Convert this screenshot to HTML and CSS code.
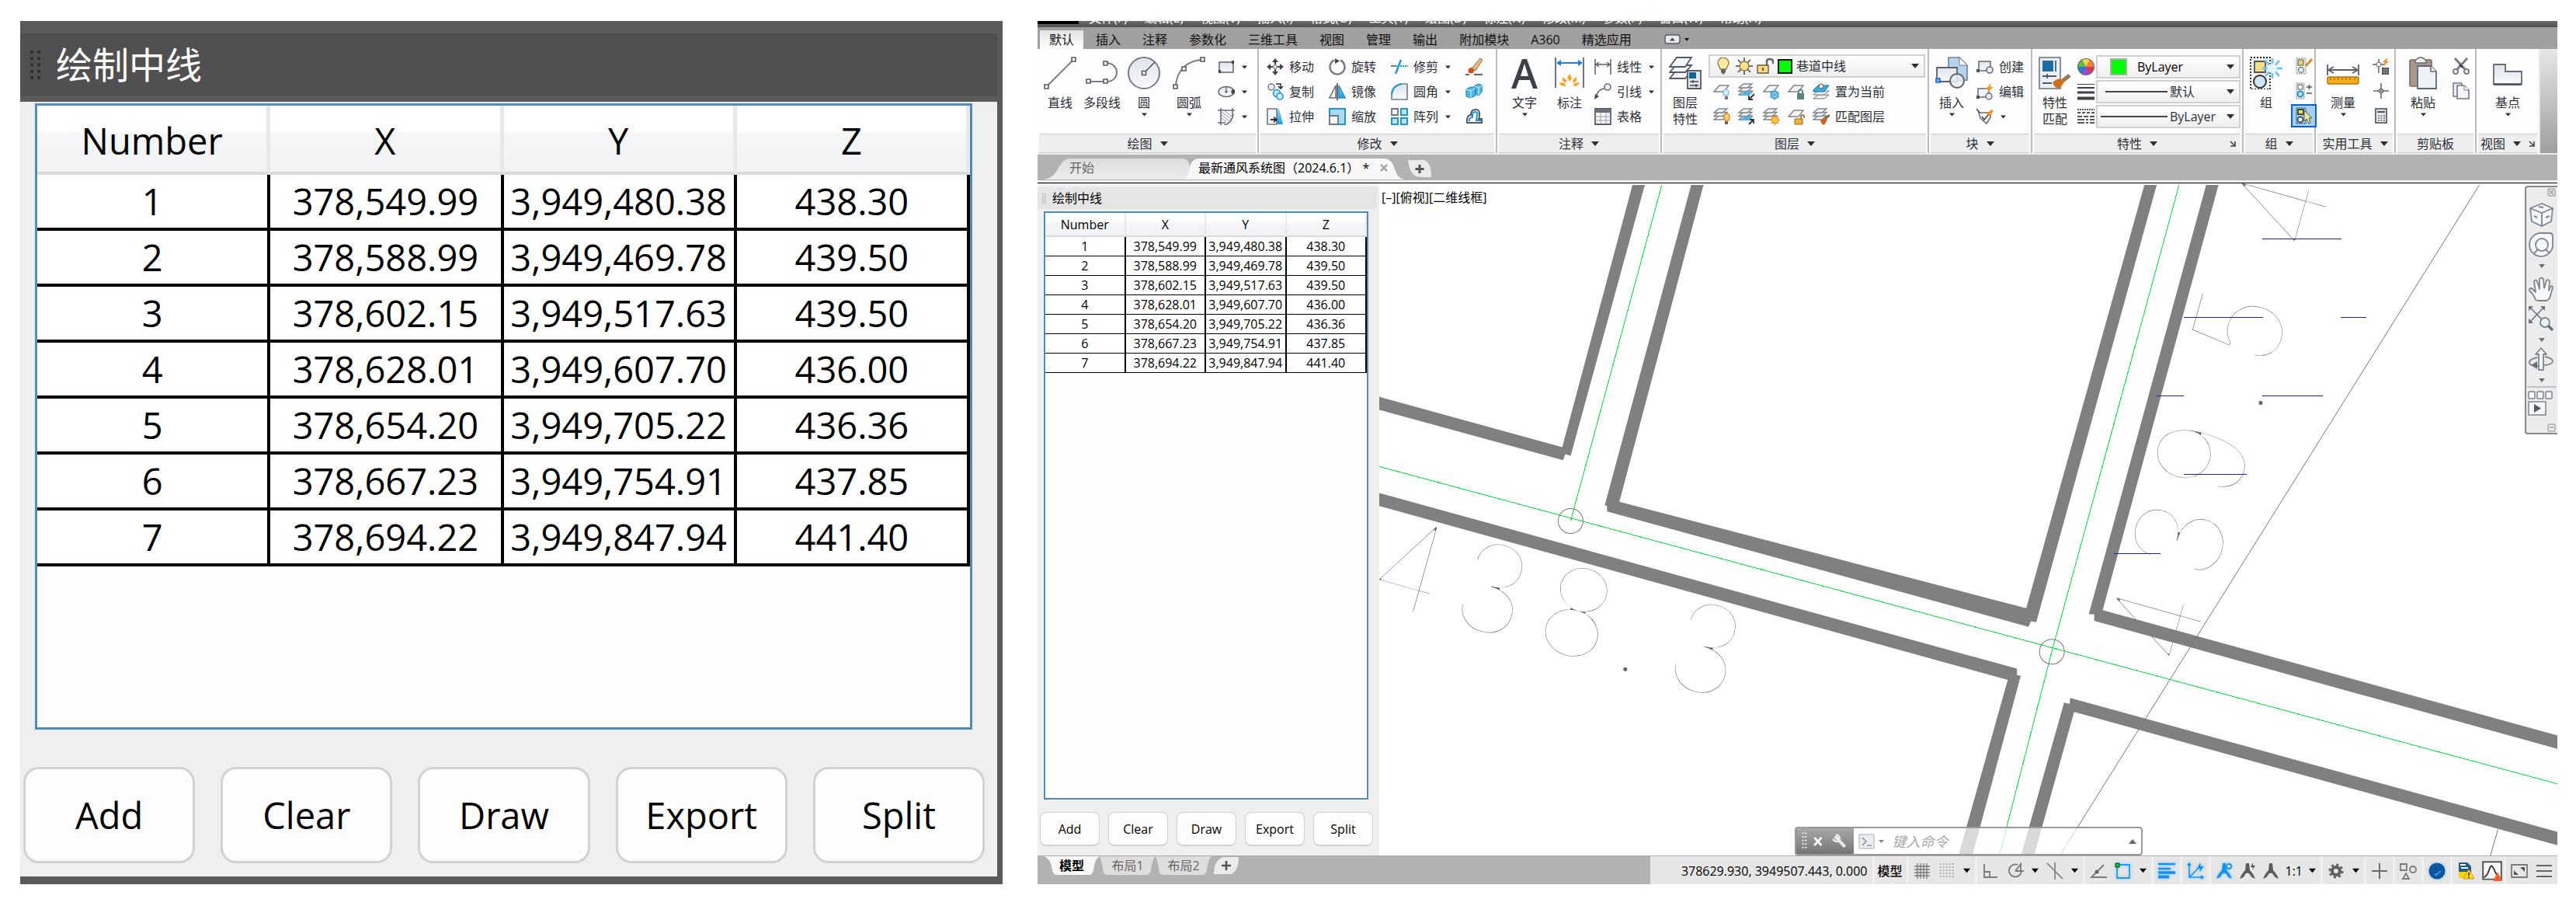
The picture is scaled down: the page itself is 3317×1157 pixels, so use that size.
FILE: index.html
```html
<!DOCTYPE html>
<html lang="zh-CN">
<head>
<meta charset="utf-8">
<meta name="viewport" content="width=device-width, initial-scale=1">
<title>绘制中线</title>
<link rel="stylesheet" href="styles.css">
</head>
<body>
<svg class="defs" aria-hidden="true">
  <defs>
    <linearGradient id="g-face" x1="0" y1="0" x2="0" y2="1"><stop offset="0" stop-color="#dfe4ee"/><stop offset="1" stop-color="#f8f9fb"/></linearGradient>
    <linearGradient id="g-blue" x1="0" y1="0" x2="0" y2="1"><stop offset="0" stop-color="#8fd4f2"/><stop offset="1" stop-color="#1c9fdd"/></linearGradient>
    <linearGradient id="g-tab" x1="0" y1="0" x2="0" y2="1"><stop offset="0" stop-color="#dcdcdc"/><stop offset="1" stop-color="#ececec"/></linearGradient>
    <symbol id="caret" viewBox="0 0 10 6"><path d="M0 0h10L5 6z" fill="currentColor"/></symbol>
    <symbol id="launch" viewBox="0 0 8 8"><path d="M1 1l5 5M7 1v6H1" fill="none" stroke="#444" stroke-width="1.6"/></symbol>
    <symbol id="sheets" viewBox="0 0 22 22"><g fill="#f4f5f7" stroke="#7c828b" stroke-width="1.3"><path d="M1 15l6-5h11l-6 5z"/><path d="M1 10.500l6-5h11l-6 5z"/><path d="M1 6l6-5h11l-6 5z"/></g></symbol>
    <symbol id="sheet" viewBox="0 0 22 22"><path d="M1 11l7-8h12l-6 8z" fill="#f6f7f9" stroke="#7c828b" stroke-width="1.4"/></symbol>
    <symbol id="compass" viewBox="0 0 22 22"><path d="M9 1h4l1 9c3 3 5 6 7 11-4-1-6-3-7-6-2-2-4-2-6 0-1 3-3 5-7 6 2-5 4-8 7-11z" fill="currentColor"/></symbol>
  </defs>
</svg>

<div class="board">
  <section class="palette palette--large" aria-label="绘制中线">
    <header class="palette__title"><svg class="grip" viewBox="0 0 13 37"><path d="M2 0v37M11 0v37" stroke="#303030" stroke-width="4" stroke-dasharray="4 4.250"/></svg><h1>绘制中线</h1></header>
    <div class="palette__body">
      <div class="list">
        <table>
          <thead><tr><th scope="col">Number</th><th scope="col">X</th><th scope="col">Y</th><th scope="col">Z</th></tr></thead>
          <tbody>
            <tr><td>1</td><td>378,549.99</td><td>3,949,480.38</td><td>438.30</td></tr>
            <tr><td>2</td><td>378,588.99</td><td>3,949,469.78</td><td>439.50</td></tr>
            <tr><td>3</td><td>378,602.15</td><td>3,949,517.63</td><td>439.50</td></tr>
            <tr><td>4</td><td>378,628.01</td><td>3,949,607.70</td><td>436.00</td></tr>
            <tr><td>5</td><td>378,654.20</td><td>3,949,705.22</td><td>436.36</td></tr>
            <tr><td>6</td><td>378,667.23</td><td>3,949,754.91</td><td>437.85</td></tr>
            <tr><td>7</td><td>378,694.22</td><td>3,949,847.94</td><td>441.40</td></tr>
          </tbody>
        </table>
      </div>
      <div class="actions"><button>Add</button><button>Clear</button><button>Draw</button><button>Export</button><button>Split</button></div>
    </div>
  </section>

  <main class="app">
    <div class="menubar"><i class="menubar__logo"></i><span>文件(F)</span><span>编辑(E)</span><span>视图(V)</span><span>插入(I)</span><span>格式(O)</span><span>工具(T)</span><span>绘图(D)</span><span>标注(N)</span><span>修改(M)</span><span>参数(P)</span><span>窗口(W)</span><span>帮助(H)</span></div>
    <nav class="tabs">
      <button class="is-active">默认</button><button>插入</button><button>注释</button><button>参数化</button><button>三维工具</button><button>视图</button><button>管理</button><button>输出</button><button>附加模块</button><button>A360</button><button>精选应用</button>
      <button class="tabs__min" aria-label="最小化"><svg width="32" height="14" viewBox="0 0 32 14"><rect x="1" y="1" width="19" height="11" rx="3" fill="#e8eaee" stroke="#555d68" stroke-width="1.500"/><path d="M7 8.500l3.500-4 3.500 4z" fill="#444b55"/><path d="M26 5h6l-3 4z" fill="#111"/></svg></button>
    </nav>

    <div class="ribbon">
      <section class="panel">
        <div class="panel__body">
          <button class="big"><svg viewBox="0 0 42 42"><path d="M4 38L38 4" stroke="#777d86" stroke-width="2"/><g fill="#fff" stroke="#555b64" stroke-width="1.600"><path d="M1 36h5v5H1zM36 1h5v5h-5z"/></g></svg><span>直线</span></button>
          <button class="big big--mid"><svg viewBox="0 0 42 42"><path d="M3 32h24c8 0 13-5 13-12S34 8 26 8" fill="none" stroke="#777d86" stroke-width="2"/><g fill="#fff" stroke="#555b64" stroke-width="1.600"><path d="M1 29h5v5H1zM23 29h5v5h-5zM23 6h5v5h-5z"/></g></svg><span>多段线</span></button>
          <button class="big"><svg viewBox="0 0 42 42"><circle cx="21" cy="21" r="20" fill="url(#g-face)" stroke="#777d86" stroke-width="2"/><path d="M21 21L35 7" stroke="#555b64" stroke-width="1.600"/><path d="M18.500 18.500h5v5h-5z" fill="#fff" stroke="#555b64" stroke-width="1.600"/></svg><span>圆</span><svg class="caret"><use href="#caret"/></svg></button>
          <button class="big"><svg viewBox="0 0 42 42"><path d="M4 38C5 18 18 5 38 4" fill="none" stroke="#777d86" stroke-width="2"/><g fill="#fff" stroke="#555b64" stroke-width="1.600"><path d="M1 36h5v5H1zM36 1h5v5h-5zM12 13h5v5h-5z"/></g></svg><span>圆弧</span><svg class="caret"><use href="#caret"/></svg></button>
          <div class="stack push-8">
            <button class="small"><svg class="ic" viewBox="0 0 22 22"><rect x="2" y="5" width="18" height="13" fill="url(#g-face)" stroke="#666c76" stroke-width="1.600"/><path d="M18 3h3v4h-3zM1 15h3v4H1z" fill="#444"/></svg><svg class="caret"><use href="#caret"/></svg></button>
            <button class="small"><svg class="ic" viewBox="0 0 22 22"><ellipse cx="11" cy="11" rx="10" ry="6.500" fill="url(#g-face)" stroke="#666c76" stroke-width="1.600"/><path d="M9 11h4M11 4v9M18 9h4v4h-4z" stroke="#444" fill="#444"/></svg><svg class="caret"><use href="#caret"/></svg></button>
            <button class="small"><svg class="ic" viewBox="0 0 22 22"><path d="M4 0v22M0 3h22M0 19h10M19 0v11M8 22q10-2 12-14" fill="none" stroke="#666c76" stroke-width="1.600"/><path d="M5 5l12 9M5 9l10 8M5 13l6 5M9 4l9 7" stroke="#8a9098"/></svg><svg class="caret"><use href="#caret"/></svg></button>
          </div>
        </div>
        <footer class="panel__name">绘图<svg class="caret"><use href="#caret"/></svg></footer>
      </section>

      <section class="panel">
        <div class="panel__body gap-19">
          <div class="stack push-10">
            <button class="small"><svg class="ic" viewBox="0 0 22 22"><path d="M11 0l4 5h-3v3h-2V5H7zM11 22l-4-5h3v-3h2v3h3zM0 11l5-4v3h3v2H5v3zM22 11l-5 4v-3h-3v-2h3V7z" fill="#3c4048"/><path d="M9 9h4v4H9z" fill="#fff" stroke="#666"/></svg>移动</button>
            <button class="small"><svg class="ic" viewBox="0 0 22 22"><circle cx="6" cy="5" r="4" fill="#eef" stroke="#70767f" stroke-width="1.500"/><path d="M12 1h6v5m-3-2l3 3 3-3" fill="none" stroke="#333" stroke-width="1.600"/><circle cx="13" cy="13" r="4.500" fill="#bfe6f8" stroke="#1996d6" stroke-width="1.600"/><circle cx="17" cy="17" r="4" fill="#d8f0fb" stroke="#1996d6" stroke-width="1.600"/></svg>复制</button>
            <button class="small"><svg class="ic" viewBox="0 0 22 22"><path d="M13 1h3l5 20h-8z" fill="url(#g-blue)"/><path d="M1 1h12v20H1z" fill="#f4f6f9" stroke="#70767f" stroke-width="1.600"/><path d="M5 15h7m-3-3l4 3-4 3" fill="none" stroke="#333" stroke-width="1.800"/></svg>拉伸</button>
          </div>
          <div class="stack">
            <button class="small"><svg class="ic" viewBox="0 0 22 22"><path d="M7 2.500A9.500 9.500 0 1 0 15 2.500" fill="none" stroke="#777d86" stroke-width="2.500"/><path d="M8 0v7l6-3.500z" fill="#444"/></svg>旋转</button>
            <button class="small"><svg class="ic" viewBox="0 0 22 22"><path d="M9 3v16H1z" fill="#f4f6f9" stroke="#666c76" stroke-width="1.500"/><path d="M13 3v16h8z" fill="url(#g-blue)" stroke="#1996d6" stroke-width="1.500"/><path d="M11 0v22" stroke="#444" stroke-width="1.600"/></svg>镜像</button>
            <button class="small"><svg class="ic" viewBox="0 0 22 22"><path d="M1 1h20v20H1z" fill="#a9dcf4" stroke="#1996d6" stroke-width="2"/><path d="M1 10h11v11H1z" fill="#f4f6f9" stroke="#70767f" stroke-width="1.800"/></svg>缩放</button>
          </div>
          <div class="stack">
            <button class="small"><svg class="ic" viewBox="0 0 22 22"><path d="M0 10h8" stroke="#777d86" stroke-width="2"/><path d="M6 20L13 2" stroke="#1996d6" stroke-width="2.400"/><path d="M12 10h10" stroke="#1996d6" stroke-width="2" stroke-dasharray="2 1"/></svg>修剪<svg class="caret"><use href="#caret"/></svg></button>
            <button class="small"><svg class="ic" viewBox="0 0 22 22"><path d="M1 21V14Q2 3 14 1h7v20z" fill="url(#g-face)" stroke="#777d86" stroke-width="1.600"/><path d="M1 14Q2 3 14 1" fill="none" stroke="#1996d6" stroke-width="2.200"/></svg>圆角<svg class="caret"><use href="#caret"/></svg></button>
            <button class="small"><svg class="ic" viewBox="0 0 22 22"><path d="M1 1h8v8H1z" fill="#f4f6f9" stroke="#70767f" stroke-width="1.800"/><path d="M13 1h8v8h-8zM1 13h8v8H1zM13 13h8v8h-8z" fill="#bfe6f8" stroke="#1996d6" stroke-width="2"/></svg>阵列<svg class="caret"><use href="#caret"/></svg></button>
          </div>
          <div class="stack">
            <button class="small" aria-label="删除"><svg class="ic" viewBox="0 0 22 22"><path d="M9 12L19 0l3 2-9 14z" fill="#e8bb7c" stroke="#8a6a3c"/><path d="M7 11l6 4-2 3-6-4z" fill="#9aa"/><circle cx="7" cy="16" r="3.500" fill="#e0480e"/><path d="M0 21h5M11 21h11" stroke="#333" stroke-width="1.500"/></svg></button>
            <button class="small" aria-label="分解"><svg class="ic" viewBox="0 0 22 22"><path d="M1 8l5-3h7v11l-6 3-6-2zM12 3l5-2 5 2v7l-5 6-4-2z" fill="#4bb4e2" stroke="#1585bf"/><path d="M1 8l6 2 6-4M7 10v9M12 4l5 2 5-3M17 6v9" stroke="#e2f5fc" fill="none"/></svg></button>
            <button class="small" aria-label="偏移"><svg class="ic" viewBox="0 0 22 22"><path d="M2 19V14q1-5 5-5 0-7 6-7t5 7q0 3-1 5h4v5z" fill="#fff" stroke="#555b64" stroke-width="2"/><path d="M5 17v-3q1-2 4-2V8q1-3 4-3t2 4l-1 7h6" fill="none" stroke="#1996d6" stroke-width="2"/></svg></button>
          </div>
        </div>
        <footer class="panel__name">修改<svg class="caret"><use href="#caret"/></svg></footer>
      </section>

      <section class="panel">
        <div class="panel__body">
          <button class="big push-6"><svg viewBox="0 0 42 42"><path d="M18 3h6l14 38h-6l-4-11H14l-4 11H4zM21 9l-5 16h10z" fill="#3c4047"/></svg><span>文字</span><svg class="caret"><use href="#caret"/></svg></button>
          <button class="big"><svg viewBox="0 0 42 42"><path d="M3 1v39M39 1v39" stroke="#70767f" stroke-width="2"/><path d="M4 8l6-4v3h22V4l6 4-6 4V9H10v3z" fill="#1d7fe6"/><path d="M21 22l3 5-3 5-3-5zM12 26l5 4-1 4-4-3zM30 26l-5 4 1 4 4-3zM8 33l7 1 1 4-6-1zM34 33l-7 1-1 4 6-1z" fill="#f9a21b"/></svg><span>标注</span></button>
          <div class="stack push-3">
            <button class="small"><svg class="ic" viewBox="0 0 22 22"><path d="M1 1v20M21 1v20M2 8h18M6 5L2 8l4 3M16 5l4 3-4 3" fill="none" stroke="#5c626b" stroke-width="1.500"/></svg>线性<svg class="caret"><use href="#caret"/></svg></button>
            <button class="small"><svg class="ic" viewBox="0 0 22 22"><circle cx="17" cy="5" r="4" fill="#f4f6f9" stroke="#666c76" stroke-width="1.600"/><path d="M13 7Q5 7 2 18" fill="none" stroke="#5c626b" stroke-width="1.600"/><path d="M0 21l1-7 5 3z" fill="#444"/></svg>引线<svg class="caret"><use href="#caret"/></svg></button>
            <button class="small"><svg class="ic" viewBox="0 0 22 22"><path d="M1 1h20v20H1z" fill="#f4f6f9" stroke="#555b64" stroke-width="1.800"/><path d="M1 1h20v5H1z" fill="#6a7079"/><path d="M8 6v15M15 6v15M1 11h20M1 16h20" stroke="#9aa0a8"/></svg>表格</button>
          </div>
        </div>
        <footer class="panel__name">注释<svg class="caret"><use href="#caret"/></svg></footer>
      </section>

      <section class="panel">
        <div class="panel__body">
          <button class="big push-1"><svg viewBox="0 0 42 42"><g fill="#f5f6f8" stroke="#555b64" stroke-width="1.800"><path d="M1 28l8-10h20l-8 10z"/><path d="M1 20l8-9h20l-8 9z"/><path d="M1 13L10 1h19l-8 12z"/><path d="M24 18h17v23H24z" fill="#e4e8ee"/></g><path d="M26 20h9v8h-9z" fill="#17649a"/><path d="M27 32h11M27 37h11M31 30v4M35 35v4" stroke="#444" stroke-width="1.500"/></svg><span>图层<br>特性</span></button>
          <div class="stack stack--wide push-1">
            <div class="combo">
              <svg class="ic" viewBox="0 0 22 22"><path d="M7 15c0-3-3-4-3-8a7 7 0 0 1 14 0c0 4-3 5-3 8z" fill="#ffe8a0" stroke="#8b7a4b" stroke-width="1.300"/><path d="M8 15h6v4l-3 3-3-3z" fill="#666"/></svg>
              <svg class="ic" viewBox="0 0 22 22"><path d="M11 0v22M0 11h22M3 3l16 16M19 3L3 19" stroke="#444" stroke-width="1.500"/><circle cx="11" cy="11" r="6" fill="#ffe08a" stroke="#8b7a4b" stroke-width="1.400"/></svg>
              <svg class="ic" viewBox="0 0 22 22"><path d="M1 10h14v10H1z" fill="#fbd98a" stroke="#6b5a34" stroke-width="1.400"/><path d="M13 10V5q0-3 4-3t4 3v3" fill="none" stroke="#666" stroke-width="2.400"/><path d="M8 13v4" stroke="#6b5a34" stroke-width="2"/></svg>
              <i class="swatch"></i>
              <select aria-label="图层"><option>巷道中线</option></select>
              <svg class="caret"><use href="#caret"/></svg>
            </div>
            <div class="tools">
              <svg class="ic" viewBox="0 0 22 22"><use href="#sheet"/><path d="M16 8a4 4 0 0 1 4 5l-1 3h-5l-1-3a4 4 0 0 1 3-5z" fill="#d8effb" stroke="#5aaede"/><path d="M15 17h4v4h-4z" fill="#777"/></svg>
              <svg class="ic" viewBox="0 0 22 22"><use href="#sheets"/><path d="M2 16l6-5h12l-6 5z" fill="#4cb5e6"/><path d="M21 14l-6 6M14 16v5h5" stroke="#333" stroke-width="1.800" fill="none"/></svg>
              <svg class="ic" viewBox="0 0 22 22"><use href="#sheet"/><circle cx="15" cy="15" r="4.500" fill="#d8effb" stroke="#3a93cc" stroke-width="2"/><path d="M15 8v14M9 12l12 6M21 12L9 18" stroke="#5aaede" stroke-width="1.500"/></svg>
              <svg class="ic" viewBox="0 0 22 22"><use href="#sheet"/><path d="M12 13h9v8h-9z" fill="#5c8577"/><path d="M14 13v-3q2-3 5 0v3" fill="none" stroke="#5c8577" stroke-width="1.800"/></svg>
              <svg class="ic" viewBox="0 0 22 22"><path d="M1 20l6-5h14l-6 5z" fill="#eee" stroke="#70767f"/><path d="M1 15l6-5h14l-6 5z" fill="#eee" stroke="#70767f"/><path d="M1 9l6-6h14l-6 8H1z" fill="#3cabe0" stroke="#1b6f9d"/><circle cx="11" cy="4" r="3" fill="#eee" stroke="#555"/></svg>
              <span>置为当前</span>
            </div>
            <div class="tools">
              <svg class="ic" viewBox="0 0 22 22"><use href="#sheets"/><path d="M17 7a4 4 0 0 1 4 5l-1 4h-5l-1-4a4 4 0 0 1 3-5z" fill="#ffd77a" stroke="#e88a1a" stroke-width="1.500"/><path d="M15 17h4v4h-4z" fill="#666"/></svg>
              <svg class="ic" viewBox="0 0 22 22"><use href="#sheets"/><path d="M2 16l6-5h12l-6 5z" fill="#4cb5e6"/><path d="M14 21l6-6M15 15h5v5" stroke="#333" stroke-width="1.800" fill="none"/></svg>
              <svg class="ic" viewBox="0 0 22 22"><use href="#sheets"/><path d="M15 9v13M9 15.500h13M11 11l9 9M20 11l-9 9" stroke="#f07c12" stroke-width="1.500"/><circle cx="15.500" cy="15.500" r="4" fill="#ffc93c" stroke="#f07c12"/></svg>
              <svg class="ic" viewBox="0 0 22 22"><use href="#sheet"/><path d="M9 14h10v7H9z" fill="#f2b632" stroke="#8b6a1c"/><path d="M17 14v-3q0-2 2-2t2 2v2" fill="none" stroke="#8b6a1c" stroke-width="1.600"/></svg>
              <svg class="ic" viewBox="0 0 22 22"><use href="#sheets"/><path d="M22 9l-6 5" stroke="#8c5a34" stroke-width="2.600"/><path d="M10 16q5-5 9-1l-4 7q-4-1-5-6z" fill="#c9641f"/></svg>
              <span>匹配图层</span>
            </div>
          </div>
        </div>
        <footer class="panel__name">图层<svg class="caret"><use href="#caret"/></svg></footer>
      </section>

      <section class="panel">
        <div class="panel__body">
          <button class="big"><svg viewBox="0 0 42 42"><path d="M17 1h14l10 10v19H17z" fill="#b4d4ee" stroke="#6b8099" stroke-width="1.600"/><path d="M31 1v10h10z" fill="#fff" stroke="#6b8099"/><path d="M2 14h26v18H2z" fill="url(#g-face)" stroke="#5c626b" stroke-width="1.800"/><circle cx="28" cy="31" r="9" fill="#e8ecf2" fill-opacity=".85" stroke="#5c626b" stroke-width="2"/><path d="M1 28h5v5H1z" fill="#6fb3ff" stroke="#1268cc" stroke-width="1.600"/></svg><span>插入</span><svg class="caret"><use href="#caret"/></svg></button>
          <div class="stack push-3">
            <button class="small"><svg class="ic" viewBox="0 0 22 22"><path d="M3 4h15v12H3z" fill="url(#g-face)" stroke="#666c76" stroke-width="1.600"/><circle cx="17" cy="15" r="4" fill="#e8ecf2" stroke="#666c76" stroke-width="1.600"/><path d="M0 14h4v4H0z" fill="#555"/></svg>创建</button>
            <button class="small"><svg class="ic" viewBox="0 0 22 22"><path d="M2 7h14v11H2z" fill="#f2f4f7" stroke="#666c76" stroke-width="1.500"/><circle cx="16" cy="17" r="4" fill="#e8ecf2" stroke="#666c76" stroke-width="1.500"/><path d="M19 0l-7 7h4l-2 5 8-7h-4z" fill="#f7a01e"/><path d="M0 16h4v4H0z" fill="#555"/></svg>编辑</button>
            <button class="small"><svg class="ic" viewBox="0 0 22 22"><path d="M3 6h15v6l-5 8-8-7z" fill="#f2f4f7" stroke="#666c76" stroke-width="1.500"/><path d="M0 1l4 5M7 11l3 4 6-7" stroke="#444" stroke-width="1.600" fill="none"/><path d="M13 8l6-6 3 2-6 7z" fill="#f28c28"/></svg><svg class="caret"><use href="#caret"/></svg></button>
          </div>
        </div>
        <footer class="panel__name">块<svg class="caret"><use href="#caret"/></svg></footer>
      </section>

      <section class="panel">
        <div class="panel__body">
          <button class="big"><svg viewBox="0 0 42 42"><path d="M1 1h27v40H1z" fill="#eceff4" stroke="#8a9098" stroke-width="2"/><path d="M5 5h14v14H5z" fill="#1b6ca3"/><path d="M22 5v14M5 25h18M5 34h12M11 22v6" stroke="#4a5a70" stroke-width="1.800"/><path d="M40 24l-9 7" stroke="#9b7654" stroke-width="5"/><path d="M18 33q8-8 16-2l-6 9q-7 2-10-7z" fill="#d0701c"/></svg><span>特性<br>匹配</span></button>
          <div class="stack">
            <div class="prop"><svg class="ic" viewBox="0 0 22 22"><circle cx="11" cy="11" r="11" fill="#666"/><path d="M11 11L6 2.500A10 10 0 0 1 16 2.500z" fill="#ffd34d"/><path d="M11 11l5-8.500A10 10 0 0 1 21 11z" fill="#f4813a"/><path d="M11 11h10a10 10 0 0 1-5 8.500z" fill="#e2374c"/><path d="M11 11l5 8.500a10 10 0 0 1-10 0z" fill="#9a4bd0"/><path d="M11 11l-5 8.500A10 10 0 0 1 1 11z" fill="#2d78d8"/><path d="M11 11H1a10 10 0 0 1 5-8.500z" fill="#5bbd4a"/></svg>
              <div class="combo combo--color"><i class="swatch swatch--plain"></i><select aria-label="颜色"><option>ByLayer</option></select><svg class="caret"><use href="#caret"/></svg></div></div>
            <div class="prop"><svg class="ic" viewBox="0 0 22 22"><path d="M0 1.500h22" stroke="#3c4048"/><path d="M0 6h22" stroke="#3c4048" stroke-width="2"/><path d="M0 12h22" stroke="#3c4048" stroke-width="3"/><path d="M0 19.500h22" stroke="#3c4048" stroke-width="4"/></svg>
              <div class="combo combo--weight"><i class="stroke"></i><select aria-label="线宽"><option>默认</option></select><svg class="caret"><use href="#caret"/></svg></div></div>
            <div class="prop"><svg class="ic" viewBox="0 0 22 22"><path d="M0 2h22" stroke="#555" stroke-width="2" stroke-dasharray="2 1"/><path d="M0 6h22" stroke="#555" stroke-width="2" stroke-dasharray="4 2"/><path d="M0 11h22" stroke="#555" stroke-width="2" stroke-dasharray="6 2"/><path d="M0 15h22M0 19h22" stroke="#555" stroke-width="2" stroke-dasharray="9 2 3 2"/></svg>
              <div class="combo combo--type"><i class="stroke"></i><select aria-label="线型"><option>ByLayer</option></select><svg class="caret"><use href="#caret"/></svg></div></div>
          </div>
        </div>
        <footer class="panel__name">特性<svg class="caret"><use href="#caret"/></svg><svg class="launch"><use href="#launch"/></svg></footer>
      </section>

      <section class="panel">
        <div class="panel__body">
          <button class="big"><svg viewBox="0 0 42 42"><path d="M1 1h25v41H1z" fill="#f2f2f2" stroke="#222" stroke-width="1.800" stroke-dasharray="2 2"/><path d="M6 6h14v14H6z" fill="#f0df86" stroke="#555" stroke-width="1.800"/><circle cx="13" cy="32" r="8" fill="#cfe6f4" stroke="#333" stroke-width="2"/><path d="M29 2v26M16 15h26M20 5l18 20M38 5L20 25" stroke="#7cc4ee" stroke-width="3"/><circle cx="29" cy="15" r="6" fill="#e6f6fe"/></svg><span>组</span></button>
          <div class="stack push-3">
            <button class="tile" aria-label="组编辑"><svg class="ic" viewBox="0 0 22 22"><path d="M1 1h12v20H1z" fill="#eee" stroke="#888" stroke-dasharray="2 1"/><path d="M3 3h7v7H3z" fill="#e8d36a" stroke="#555"/><circle cx="7" cy="16" r="3.500" fill="#dff1fb" stroke="#555"/><path d="M21 2l-8 9" stroke="#e38b2a" stroke-width="3"/></svg></button>
            <button class="tile" aria-label="添加删除"><svg class="ic" viewBox="0 0 22 22"><path d="M1 1h10v20H1z" fill="#eee" stroke="#888" stroke-dasharray="2 1"/><path d="M3 3h6v6H3z" fill="#fff" stroke="#555"/><circle cx="6" cy="15" r="3.500" fill="#bfe6f8" stroke="#1996d6" stroke-width="2"/><path d="M14 6h7M17.500 3v6M14 14h7" stroke="#555" stroke-width="1.600"/></svg></button>
            <button class="tile is-on" aria-label="组选择"><svg class="ic" viewBox="0 0 22 22"><path d="M1 1h12v20H1z" fill="#9cc9ee" stroke="#246" stroke-dasharray="2 1"/><path d="M3 3h7v6H3z" fill="#f0df60" stroke="#222" stroke-width="1.500"/><circle cx="6" cy="16" r="3.500" fill="#dff1fb" stroke="#333" stroke-width="1.500"/><path d="M11 4v14l3-3 3 6 2-1-2-6h4z" fill="#f5e69a" stroke="#555"/></svg></button>
          </div>
        </div>
        <footer class="panel__name">组<svg class="caret"><use href="#caret"/></svg></footer>
      </section>

      <section class="panel">
        <div class="panel__body">
          <button class="big push-6"><svg viewBox="0 0 42 42"><path d="M1 10v14M41 10v14M2 17h38M9 13l-7 4 7 4M33 13l7 4-7 4" fill="none" stroke="#5c626b" stroke-width="1.800"/><rect x="1" y="26" width="40" height="9" rx="2" fill="#f7ae1d" stroke="#b9740f" stroke-width="1.500"/><path d="M5 27v3M10 27v3M15 27v3M20 27v3M25 27v3M30 27v3M36 27v3" stroke="#8d5a10"/></svg><span>测量</span><svg class="caret"><use href="#caret"/></svg></button>
          <div class="stack push-3">
            <button class="tile" aria-label="快速选择"><svg class="ic" viewBox="0 0 22 22"><path d="M0 9h16M8 2v18" stroke="#666" stroke-width="1.500"/><circle cx="8" cy="9" r="3" fill="#fff" stroke="#666"/><path d="M19 0l-6 6h3l-2 5 7-6h-3z" fill="#f68b1f"/><path d="M12 13h9v9h-9z" fill="#444"/><path d="M15 13v9M18 13v9M12 16h9M12 19h9" stroke="#ccc" stroke-width=".6"/></svg></button>
            <button class="tile" aria-label="点坐标"><svg class="ic" viewBox="0 0 22 22"><path d="M1 11h20M11 1v20" stroke="#666" stroke-width="1.500"/><circle cx="11" cy="11" r="3" fill="#999" stroke="#666"/></svg></button>
            <button class="tile" aria-label="计算器"><svg class="ic" viewBox="0 0 22 22"><rect x="4" y="2" width="14" height="18" fill="#eceff4" stroke="#5c626b" stroke-width="1.800"/><path d="M6 6h10" stroke="#5c626b" stroke-width="2.500"/><path d="M7 11h9M7 14h9M7 17h9" stroke="#5c626b" stroke-width="1.600" stroke-dasharray="2 1.500"/></svg></button>
          </div>
        </div>
        <footer class="panel__name">实用工具<svg class="caret"><use href="#caret"/></svg></footer>
      </section>

      <section class="panel">
        <div class="panel__body">
          <button class="big push-6"><svg viewBox="0 0 42 42"><rect x="4" y="4" width="28" height="34" rx="2" fill="#a8988a" stroke="#7a6c60" stroke-width="1.600"/><path d="M11 5q7-8 14 0v3H11z" fill="#eef0f3" stroke="#666c76" stroke-width="1.500"/><path d="M14 12h17l7 7v22H14z" fill="#eef2f8" stroke="#5c6a80" stroke-width="1.800"/><path d="M31 12v7h7" fill="#fff" stroke="#5c6a80" stroke-width="1.500"/></svg><span>粘贴</span><svg class="caret"><use href="#caret"/></svg></button>
          <div class="stack push-3">
            <button class="tile" aria-label="剪切"><svg class="ic" viewBox="0 0 22 22"><path d="M3 1l13 14M19 1L6 15" stroke="#777d86" stroke-width="3"/><path d="M9 9l4 4" stroke="#333" stroke-width="2"/><ellipse cx="4" cy="18" rx="3" ry="3" fill="none" stroke="#777d86" stroke-width="2"/><ellipse cx="18" cy="18" rx="3" ry="3" fill="none" stroke="#777d86" stroke-width="2"/></svg></button>
            <button class="tile" aria-label="复制"><svg class="ic" viewBox="0 0 22 22"><path d="M1 1h11v17H1z" fill="#eceff4" stroke="#70767f" stroke-width="1.500"/><path d="M6 4h9l6 6v11H6z" fill="#f5f6f8" stroke="#70767f" stroke-width="1.600"/><path d="M15 4v6h6" fill="#fff" stroke="#70767f"/></svg></button>
          </div>
        </div>
        <footer class="panel__name">剪贴板</footer>
      </section>

      <section class="panel panel--last">
        <div class="panel__body panel__body--center">
          <button class="big"><svg viewBox="0 0 42 42"><path d="M3 10h15v9h21v16H3z" fill="url(#g-face)" stroke="#666c76" stroke-width="1.800"/><path d="M3 36h36" stroke="#555b64" stroke-width="2"/></svg><span>基点</span><svg class="caret"><use href="#caret"/></svg></button>
        </div>
        <footer class="panel__name">视图<svg class="caret"><use href="#caret"/></svg><svg class="launch"><use href="#launch"/></svg></footer>
      </section>
      <div class="ribbon__rest"></div>
    </div>

    <nav class="files">
      <button class="file"><svg class="file__shape" viewBox="0 0 200 30" preserveAspectRatio="none"><path d="M0 30C24 30 20 3 38 3h150q12 0 12 12v15z" fill="url(#g-tab)"/></svg><span>开始</span></button>
      <button class="file file--open"><svg class="file__shape" viewBox="0 0 290 30" preserveAspectRatio="none"><path d="M0 30C16 30 4 3 24 3h236c20 0 10 27 30 27z" fill="#f7f7f7"/></svg><span>最新通风系统图（2024.6.1） *</span><svg class="file__close" viewBox="0 0 10 10"><path d="M1 1l8 8M9 1L1 9" stroke="#a8a8a8" stroke-width="2.600"/></svg></button>
      <button class="file-add" aria-label="新建"><svg viewBox="0 0 30 22"><path d="M0 0h20q10 2 10 22H14Q2 20 0 0z" fill="#ebebeb"/><path d="M15 6v11M9.500 11.500h11" stroke="#555" stroke-width="3"/></svg></button>
    </nav>

    <div class="work">
      <section class="palette palette--docked" aria-label="绘制中线">
        <header class="palette__title"><svg class="grip" viewBox="0 0 5 13"><path d="M1 0v13M4 0v13" stroke="#999" stroke-dasharray="2 1"/></svg><h2>绘制中线</h2></header>
        <div class="palette__body">
          <div class="list">
            <table>
              <thead><tr><th scope="col">Number</th><th scope="col">X</th><th scope="col">Y</th><th scope="col">Z</th></tr></thead>
              <tbody>
                <tr><td>1</td><td>378,549.99</td><td>3,949,480.38</td><td>438.30</td></tr>
                <tr><td>2</td><td>378,588.99</td><td>3,949,469.78</td><td>439.50</td></tr>
                <tr><td>3</td><td>378,602.15</td><td>3,949,517.63</td><td>439.50</td></tr>
                <tr><td>4</td><td>378,628.01</td><td>3,949,607.70</td><td>436.00</td></tr>
                <tr><td>5</td><td>378,654.20</td><td>3,949,705.22</td><td>436.36</td></tr>
                <tr><td>6</td><td>378,667.23</td><td>3,949,754.91</td><td>437.85</td></tr>
                <tr><td>7</td><td>378,694.22</td><td>3,949,847.94</td><td>441.40</td></tr>
              </tbody>
            </table>
          </div>
          <div class="actions"><button>Add</button><button>Clear</button><button>Draw</button><button>Export</button><button>Split</button></div>
        </div>
      </section>

      <section class="canvas" aria-label="图形">
        <svg class="drawing" viewBox="0 0 1517 864" preserveAspectRatio="xMidYMid slice">
          <g class="note">
            <g transform="translate(39 550) rotate(15.700)"><text x="-14 96 209 288 381" y="0">438.3</text></g>
            <g transform="translate(1058 567) rotate(-74.300)"><text x="-16 98 206 295 382" y="0">439.5</text></g>
            <g transform="translate(1220 31) rotate(-74.300)"><text x="-19" y="0">4</text></g>
          </g>
          <g transform="translate(-16 -16) scale(.993 .598)">
            <g class="wall">
              <path d="M16 485L254 594 345 30h16L265 612l-7-3-3 13L16 513z"/>
              <path d="M421 30h16L328 711 855 940 1008 30h16L868 970l-7-2-3 12L312 732v-12l-3-1z"/>
              <path d="M1088 30h16L954 944l590 270v29L943 967v-14h-7z"/>
              <path d="M16 692L843 1070v14l5 1-63 388h-18l64-379L16 720z"/>
              <path d="M912 1133l632 288v29L917 1163l-52 310h-17l56-330 7 3z"/>
            </g>
            <g class="axis"><path d="M383 30L265 752M16 635l1528 683M1053 30L888 1034 820 1473"/></g>
            <g class="thin"><path d="M1442 30L898 1473M1466 1415l-10 58"/></g>
            <g class="mark"><path d="M1161 146h102M1059 315h103M1262 315h33M1024 484h35M1161 484h78M1059 653h82M969 822h60"/></g>
          </g>
          <g class="thin"><circle cx="247" cy="434" r="16"/><circle cx="866" cy="602" r="16"/></g>
        </svg>
        <p class="view-label">[–][俯视][二维线框]</p>

        <aside class="navbar">
          <svg viewBox="0 0 42 320">
            <g fill="#eee" stroke="#aaa" stroke-width="1.500"><rect x="30" y="4" width="9" height="9" rx="2"/><rect x="30" y="307" width="9" height="9" rx="2"/></g>
            <path d="M32 6l5 5M37 6l-5 5M32 311h5" stroke="#999" stroke-width="1.400"/>
            <g fill="#f6f7f9" stroke="#7e858e" stroke-width="1.800" stroke-linejoin="round">
              <path d="M7 29l15-6 14 6-2 17-12 6-13-6z"/><path d="M7 29l15 6 14-6M22 35v17" fill="none"/><path d="M12 39l4 2M27 41l5-2M18 27l6 1" stroke-width="2"/>
              <path d="M22 61h10q4 0 4 4v10a15 15 0 1 1-14-14z"/><circle cx="22" cy="76" r="8"/><path d="M12 87l5-5M32 87l-5-5"/>
              <path d="M14 147q-3-8-8-12-1-3 3-3l5 5-2-14q2-3 4 0l3 10v-13q2-3 5 0l1 12 3-10q3-2 4 1l-1 12 2-5q3-2 3 1l-4 14-4 3H17z"/>
              <path d="M18 237v-20h-4l7-8 7 8h-4v20z"/><path d="M16 221c-14 3-14 11 2 11M26 220c14 3 13 10-1 11" fill="none"/>
            </g>
            <g fill="#6a7079"><path d="M18 101h8l-4 5zM18 196h8l-4 5zM18 248h8l-4 5zM16 226v10l-8-5z"/><path d="M5 155h6l-6 6zM26 155v6l-6-6zM5 177v-6l6 6z"/></g>
            <path d="M7 157l17 17M24 157L7 175" stroke="#6a7079" stroke-width="1.500"/>
            <circle cx="26" cy="176" r="6" fill="#eaf4f4" stroke="#7e858e" stroke-width="1.800"/><path d="M30 180l6 6" stroke="#6a7079" stroke-width="3.500"/>
            <path d="M3 259h37" stroke="#999"/>
            <g fill="#f6f7f9" stroke="#7e858e" stroke-width="1.500"><rect x="5" y="265" width="8" height="9" rx="1"/><rect x="16" y="265" width="8" height="9" rx="1"/><rect x="27" y="265" width="8" height="9" rx="1"/><path d="M5 278h22v17H5z"/></g>
            <path d="M12 281v11l9-5.500z" fill="#555b64"/>
          </svg>
        </aside>

        <form class="command">
          <div class="command__grip">
            <svg viewBox="0 0 74 36"><path d="M6 6v24M10 6v24" stroke="#e6e6e6" stroke-width="2.500" stroke-dasharray="2 3"/><path d="M22 13l10 11M32 13L22 24" stroke="#fff" stroke-width="3"/><path d="M51 11l14 15" stroke="#e8e8e8" stroke-width="4.500"/><circle cx="53" cy="14" r="4.500" fill="none" stroke="#e8e8e8" stroke-width="3" stroke-dasharray="21 7" transform="rotate(-100 53 14)"/></svg>
          </div>
          <svg class="command__prompt" viewBox="0 0 34 20"><rect x="1" y="1" width="19" height="18" rx="1" fill="#e9edf1" stroke="#c0c5cb" stroke-width="1.500"/><path d="M5 5l5 5-5 5M11 15h6" fill="none" stroke="#8b9097" stroke-width="1.600"/><path d="M26 8h7l-3.500 4z" fill="#888"/></svg>
          <input type="text" aria-label="命令" placeholder="键入命令">
          <svg class="command__up" viewBox="0 0 10 6"><path d="M0 6h10L5 0z" fill="#666"/></svg>
        </form>
      </section>
    </div>

    <footer class="bottom">
      <nav class="layouts">
        <button class="layout layout--open"><svg viewBox="0 0 74 24" preserveAspectRatio="none"><path d="M0 0h74q-6 3-8 16-1 8-6 8H17q-5 0-6-8Q9 3 0 0z" fill="#f8f8f8"/></svg><span>模型</span></button>
        <button class="layout"><svg viewBox="0 0 74 24" preserveAspectRatio="none"><path d="M0 0h74q-4 3-6 16-1 8-6 8H10q-5 0-6-8Q2 3 0 0z" fill="#dedede"/></svg><span>布局1</span></button>
        <button class="layout"><svg viewBox="0 0 74 24" preserveAspectRatio="none"><path d="M0 0h74q-4 3-6 16-1 8-6 8H10q-5 0-6-8Q2 3 0 0z" fill="#dedede"/></svg><span>布局2</span></button>
        <button class="layout-add" aria-label="新建布局"><svg viewBox="0 0 32 22"><path d="M12 0h20q0 18-10 22H0Q0 4 12 0z" fill="#ebebeb"/><path d="M16 5v12M10 11h12" stroke="#555" stroke-width="2.600"/></svg></button>
      </nav>
      <div class="status">
        <div class="cell cell--xyz">378629.930, 3949507.443, 0.000</div>
        <div class="cell cell--model">模型</div>
        <div class="cell">
          <svg class="st" viewBox="0 0 22 22"><path d="M5 1v20M9 1v20M13 1v20M17 1v20M1 5h20M1 9h20M1 13h20M1 17h20" stroke="#7a7a7a" stroke-width="1.300"/></svg>
          <svg class="st" viewBox="0 0 22 22"><path d="M2 2h19M2 6h19M2 10h19M2 14h19M2 18h19" stroke="#8a8a8a" stroke-width="1.500" stroke-dasharray="1.500 2.500"/></svg>
          <svg class="caret"><use href="#caret"/></svg>
        </div>
        <div class="cell">
          <svg class="st" viewBox="0 0 22 22"><path d="M3 2v17h17M3 12h7v7" fill="none" stroke="#7a7a7a" stroke-width="1.800"/></svg>
          <svg class="st" viewBox="0 0 22 22"><path d="M19 11a8 8 0 1 1-5-8M11 11h11M11 11l7-9v9" fill="none" stroke="#7a7a7a" stroke-width="1.800"/></svg>
          <svg class="caret"><use href="#caret"/></svg>
          <svg class="st" viewBox="0 0 22 22"><path d="M11 0v22M1 1l20 20" stroke="#7a7a7a" stroke-width="1.600"/></svg>
          <svg class="caret"><use href="#caret"/></svg>
        </div>
        <div class="cell">
          <svg class="st" viewBox="0 0 22 22"><path d="M18 3L2 19h20" fill="none" stroke="#7a7a7a" stroke-width="1.800"/><circle cx="9" cy="12" r="2.500" fill="#666"/></svg>
          <svg class="st st--glow" viewBox="0 0 22 22"><path d="M3 3h16v17H3z" fill="none" stroke="#1a9cf5" stroke-width="1.800"/><path d="M1 1h5v5H1z" fill="#12d012" stroke="#222"/></svg>
          <svg class="caret"><use href="#caret"/></svg>
        </div>
        <div class="cell"><svg class="st st--glow" viewBox="0 0 22 22"><path d="M0 2h22M0 8h16" stroke="#1492f0" stroke-width="2.600"/><path d="M0 13h22" stroke="#1492f0" stroke-width="3.500"/><path d="M0 18.500h14" stroke="#1492f0" stroke-width="4"/></svg></div>
        <div class="cell"><svg class="st st--glow" viewBox="0 0 22 22"><path d="M3 1v18h18M3 19L14 8M1 4l2-3 2 3M18 17l3 2-3 2" fill="none" stroke="#1492f0" stroke-width="1.600"/><path d="M17 0l-4 8h4l-1 5 6-8h-4z" fill="#1492f0"/></svg></div>
        <div class="cell cell--scale">
          <svg class="st st--glow st--blue" viewBox="0 0 22 22"><use href="#compass"/><circle cx="17" cy="5" r="3" fill="#e6e6e6" stroke="#1492f0" stroke-width="1.800"/></svg>
          <svg class="st st--gray" viewBox="0 0 22 22"><use href="#compass"/><path d="M18 0l-3 6h3l-1 4 4-6h-3z" fill="#555"/></svg>
          <svg class="st st--gray" viewBox="0 0 22 22"><use href="#compass"/></svg>
          <span>1:1</span><svg class="caret"><use href="#caret"/></svg>
        </div>
        <div class="cell"><svg class="st" viewBox="0 0 22 22"><circle cx="11" cy="11" r="5" fill="none" stroke="#606060" stroke-width="4"/><circle cx="11" cy="11" r="8" fill="none" stroke="#606060" stroke-width="3" stroke-dasharray="3 3.280"/></svg><svg class="caret"><use href="#caret"/></svg></div>
        <div class="cell"><svg class="st" viewBox="0 0 22 22"><path d="M11 1v20M1 11h20" stroke="#6a6a6a" stroke-width="2"/></svg></div>
        <div class="cell"><svg class="st" viewBox="0 0 22 22"><path d="M1 2h8v8H1zM8 14l4 7H4z" fill="none" stroke="#7a7a7a" stroke-width="1.800"/><circle cx="17" cy="9" r="4" fill="none" stroke="#7a7a7a" stroke-width="1.800"/></svg></div>
        <div class="cell"><svg class="st st--glow" viewBox="0 0 22 22"><circle cx="11" cy="11" r="10.500" fill="#0b569f"/><path d="M8 15l2 1 6-5" stroke="#4aa2ec" stroke-width="1.600" fill="none"/></svg></div>
        <div class="cell">
          <svg class="st" viewBox="0 0 22 22"><path d="M2 0h11l5 5v15H2z" fill="#1f5a88"/><path d="M2 12h12v8H2z" fill="#f4d21a"/><path d="M4 3h7M5 7h9" stroke="#fff" stroke-width="2"/><path d="M15 9l7 12H8z" fill="#ffe01a" stroke="#e08a12"/><path d="M15 13v4M15 18v2" stroke="#222" stroke-width="1.500"/></svg>
          <svg class="st st--large" viewBox="0 0 22 22"><path d="M1 1h20v19H1z" fill="#f6f6f6" stroke="#555" stroke-width="1.600"/><path d="M2 18Q6 16 8 9t5 0 5 8" fill="none" stroke="#333" stroke-width="1.500"/><path d="M17 12l5 10H12z" fill="#f0642a"/></svg>
        </div>
        <div class="cell">
          <svg class="st" viewBox="0 0 22 22"><path d="M1 3h20v16H1z" fill="none" stroke="#7a7a7a" stroke-width="1.800"/><path d="M12 6h6v6zM4 10v6h6z" fill="#555"/></svg>
          <svg class="st" viewBox="0 0 22 22"><path d="M1 4h20M1 11h20M1 18h20" stroke="#666" stroke-width="2"/></svg>
        </div>
      </div>
    </footer>
  </main>
</div>
</body>
</html>
```

FILE: styles.css
```css
* { box-sizing: border-box; }

body {
  margin: 0;
  background: #fff;
  color: #222;
  font: 16px/22px "Open Sans", "Noto Sans", "Noto Sans CJK SC", sans-serif;
}

h1, h2, p { margin: 0; font-weight: 400; }

button {
  margin: 0;
  padding: 0;
  border: 0;
  background: none;
  color: inherit;
  font: inherit;
}

select, input { font: inherit; color: inherit; }

svg { display: block; flex: none; }

.defs { position: absolute; width: 0; height: 0; }

.board {
  display: grid;
  grid-template-columns: 1265fr 1957fr;
  gap: 45px;
  min-height: 100vh;
  padding: 27px 24px 19px 26px;
}

/* Palette: a title bar, a point list and a row of actions */
.palette { display: flex; flex-direction: column; min-width: 0; }
.palette__title { display: flex; align-items: center; flex: none; }
.palette__title h1, .palette__title h2 { font-size: inherit; line-height: inherit; }
.palette__body { display: flex; flex-direction: column; flex: 1; background: #efefef; color: #000; }

.list { flex: 1; border: 2px solid #4f8db5; background: #fdfdfd; }
.list table { width: 100%; border-collapse: separate; border-spacing: 0; table-layout: fixed; }
.list th, .list td { padding: 0; font-weight: 400; text-align: center; white-space: nowrap; }
.list td { background: #fff; }
.list th {
  border-bottom: 2px solid #d8dadc;
  background: linear-gradient(#fff 40%, #f5f6f8 42%, #f0f2f4);
}

.actions { display: grid; grid-template-columns: repeat(5, 1fr); flex: none; }
.actions button { border: 2px solid #d2d2d2; border-radius: 8px; background: #fdfdfd; color: #000; }

.palette--large { padding: 16px 7px 10px 0; background: #5a5a5a; font-size: 47px; line-height: 56px; }
.palette--large .palette__title { height: 88px; gap: 20px; padding-left: 13px; border-bottom: 8px solid #5a5a5a; background: #505050; color: #fff; }
.palette--large .grip { width: 13px; height: 37px; }
.palette--large .list { margin: 2px 32px 0 19px; border-width: 3px; }
.palette--large th { height: 89px; padding-top: 4px; border-bottom-width: 4px; border-right: 5px solid #e6e8ea; }
.palette--large td { height: 72px; border-right: 4px solid #000; border-bottom: 4px solid #000; }
.palette--large .actions { gap: 33px; margin: 48px 16px 17px 4px; }
.palette--large .actions button { height: 124px; border-width: 3px; border-radius: 20px; }

.palette--docked { padding-top: 5px; background: #efefef; }
.palette--docked .palette__title { height: 28px; gap: 8px; margin-right: 3px; padding-left: 6px; background: #e6e6e6; color: #000; }
.palette--docked .grip { width: 5px; height: 13px; }
.palette--docked .list { margin: 3px 14px 0 8px; }
.palette--docked th { height: 31px; border-right: 2px solid #e6e8ea; }
.palette--docked td { height: 25px; border-right: 2px solid #000; border-bottom: 1px solid #000; line-height: 20px; }
.palette--docked .actions { gap: 11px; margin: 16px 8px 12px 3px; }
.palette--docked .actions button { height: 44px; border-width: 1px 1px 2px; }

/* Application window */
.app { display: flex; flex-direction: column; min-width: 0; }

.menubar {
  display: flex;
  align-items: flex-end;
  gap: 22px;
  height: 8px;
  padding-bottom: 2px;
  overflow: hidden;
  background: linear-gradient(#6c6c6c, #505050);
  color: #fff;
  line-height: 20px;
  white-space: nowrap;
}
.menubar__logo { width: 53px; height: 4px; margin-right: -9px; margin-bottom: 2px; background: #000; }

.tabs { display: flex; align-items: flex-end; height: 28px; padding-left: 3px; background: #a0a0a0; color: #111; }
.tabs button { height: 24px; padding: 0 14px; line-height: 24px; white-space: nowrap; }
.tabs .is-active { padding: 0 12px; margin-right: 2px; background: linear-gradient(#e2e2e2, #fff); }
.tabs button:nth-child(11) { margin-right: 14px; }

.ribbon {
  display: grid;
  grid-template-columns: 285fr 307fr 212fr 344fr 133fr 272fr 93fr 103fr 104fr 82fr 22fr;
  height: 136px;
  border-bottom: 2px solid #ececec;
  background: #fdfdfd;
}
.ribbon__rest { background: linear-gradient(#e6e6e6, #9e9e9e); }

.panel { display: flex; flex-direction: column; min-width: 0; border-right: 2px solid #bbb; color: #2b2f36; }
.panel--last { border-right-color: #e8e8e8; }
.panel__body { display: flex; height: 109px; padding-top: 7px; }
.panel__body--center { justify-content: center; }
.panel__name {
  position: relative;
  display: flex;
  align-items: center;
  justify-content: center;
  gap: 10px;
  height: 25px;
  margin: 0 2px;
  border-top: 1px solid #ccc;
  border-bottom: 1px solid #ccc;
  background: #eee;
}
.panel__name .caret { width: 10px; height: 6px; }
.launch { width: 8px; height: 8px; position: absolute; right: 6px; }
.panel--last .launch { position: static; }

.caret { width: 7px; height: 5px; }
.ic { width: 22px; height: 22px; }
.push-1 { margin-left: 1px; }
.push-3 { margin-left: 3px; }
.push-6 { margin-left: 6px; }
.push-8 { margin-left: 8px; }
.push-10 { margin-left: 10px; }
.gap-19 { gap: 19px; }

.big { display: flex; flex: none; flex-direction: column; align-items: center; width: 58px; padding-top: 3px; line-height: 21px; }
.big--mid { width: 50px; }
.big > svg:first-child { width: 42px; height: 42px; margin-bottom: 7px; }
.big .caret { margin-top: 2px; }

.stack { display: grid; grid-template-rows: repeat(3, 32px); align-content: start; }
.stack--wide { flex: 1; margin-right: 3px; }
.small { display: flex; align-items: center; gap: 7px; white-space: nowrap; }
.small .caret { margin-left: 8px; }
.small .ic + .caret { margin-left: 2px; }
.tile { display: grid; place-items: center; width: 33px; height: 30px; }
.tile.is-on { border: 2px solid #0a63c8; background: #a5d0f4; }

.tools { display: flex; align-items: center; gap: 10px; padding-left: 6px; white-space: nowrap; }
.tools span { margin-left: -3px; }

.combo { display: flex; align-items: center; gap: 5px; height: 30px; padding: 0 6px 0 6px; border: 2px solid #d0d0d0; background: linear-gradient(#fff, #eee); }
.combo select { flex: 1; min-width: 0; height: 24px; padding: 0; border: 0; outline: 0; background: none; appearance: none; }
.combo .caret { width: 10px; height: 6px; }
.swatch { width: 19px; height: 19px; border: 2px solid #111; background: #0f0; }
.prop { display: grid; grid-template-columns: 22px 186px; gap: 2px; align-items: center; }
.swatch--plain { width: 22px; height: 22px; margin: 0 8px 0 10px; border-color: #aaa; }
.combo--color select { color: #000; }
.stroke { height: 2px; background: #444; }
.combo--weight .stroke { width: 80px; margin-left: 4px; }
.combo--type .stroke { width: 86px; margin-left: -2px; }
.combo--weight, .combo--type { gap: 3px; }

/* Drawing tabs */
.files { display: flex; align-items: flex-end; height: 37px; padding-bottom: 4px; border-bottom: 1px solid #000; background: linear-gradient(#b2b2b2 33px, #f0f0f0 33px); }
.file { position: relative; display: flex; align-items: center; width: 190px; height: 30px; margin-left: 6px; padding-left: 35px; color: #666; white-space: nowrap; }
.file__shape { position: absolute; inset: 0; width: 100%; height: 100%; }
.file span, .file__close { position: relative; }
.file--open { width: 290px; margin-left: -11px; padding-left: 22px; color: #000; }
.file__close { width: 10px; height: 10px; margin-left: 14px; }
.file-add svg { width: 30px; height: 22px; margin-bottom: 3px; }
.file-add { margin-left: 2px; }

.work { display: grid; grid-template-columns: 440fr 1517fr; flex: 1; min-height: 0; }

.canvas { position: relative; overflow: hidden; min-width: 0; background: #fff; }
.drawing { position: absolute; inset: 0; width: 100%; height: 100%; }
.wall { fill: #808080; }
.axis, .thin, .mark { fill: none; }
.axis path, .thin path, .mark path { vector-effect: non-scaling-stroke; }
.axis { stroke: #00f03c; shape-rendering: crispEdges; }
.thin { stroke: #777; }
.mark { stroke: #2020a8; shape-rendering: crispEdges; }
/* The page-coloured outline thins the dimension digits to a hairline */
.note { fill: #666; stroke: #fff; stroke-width: 3px; font-family: Inter, "Open Sans", sans-serif; font-size: 158px; font-weight: 100; text-anchor: middle; }
.view-label { position: relative; padding: 7px 3px; color: #000; }

.navbar { position: absolute; top: 3px; right: 0; width: 42px; height: 320px; border: 2px solid #8a8a8a; border-right: 0; border-radius: 4px 0 0 4px; background: #ececec; }
.navbar svg { width: 42px; height: 320px; margin: -2px; }

.command {
  position: absolute;
  bottom: 0;
  left: 50%;
  display: flex;
  align-items: center;
  width: 448px;
  height: 37px;
  border: 2px solid #999;
  border-radius: 4px;
  background: rgba(255, 255, 255, .7);
  transform: translateX(-50%);
}
.command__grip { width: 74px; background: linear-gradient(#a8a8a8, #757575); }
.command__grip svg { width: 74px; height: 33px; }
.command__prompt { width: 34px; height: 20px; margin: 0 10px 0 6px; }
.command input { flex: 1; min-width: 0; padding: 0; border: 0; outline: 0; background: none; font-size: 18px; }
.command input::placeholder { color: #aaa; font-style: italic; opacity: 1; }
.command__up { width: 10px; height: 6px; margin-right: 6px; }

/* Layout tabs and status bar */
.bottom { display: flex; height: 37px; border-top: 1px solid #a8a8a8; background: #b2b2b2; }
.layouts { display: flex; flex: 1; align-items: flex-start; padding-left: 8px; color: #666; }
.layout { position: relative; width: 72px; height: 24px; }
.layout svg { position: absolute; inset: 0; width: 100%; height: 100%; }
.layout span { position: relative; }
.layout--open { color: #000; font-weight: 700; }
.layout-add { margin-left: 3px; }
.layout-add svg { width: 32px; height: 22px; margin-top: 1px; }

.status { display: flex; flex: none; background: #e6e6e6; color: #000; border-top: 1px solid #eee; }
.cell { display: flex; align-items: center; gap: 10px; padding: 0 6px; border-right: 3px solid #f0f0f0; white-space: nowrap; }
.cell:last-child { border-right: 0; }
.cell--xyz { width: 289px; justify-content: flex-end; }
.cell--model { width: 44px; padding: 0 4px; font-weight: 500; }
.cell--scale { gap: 8px; }
.cell .caret { width: 9px; height: 7px; }
.st { width: 22px; height: 22px; }
.st--large { width: 26px; height: 26px; margin-right: -4px; }
.st--glow { filter: drop-shadow(0 0 2px #8cc8ff); }
.st--blue { color: #1492f0; }
.st--gray { color: #5c5c5c; }
```
